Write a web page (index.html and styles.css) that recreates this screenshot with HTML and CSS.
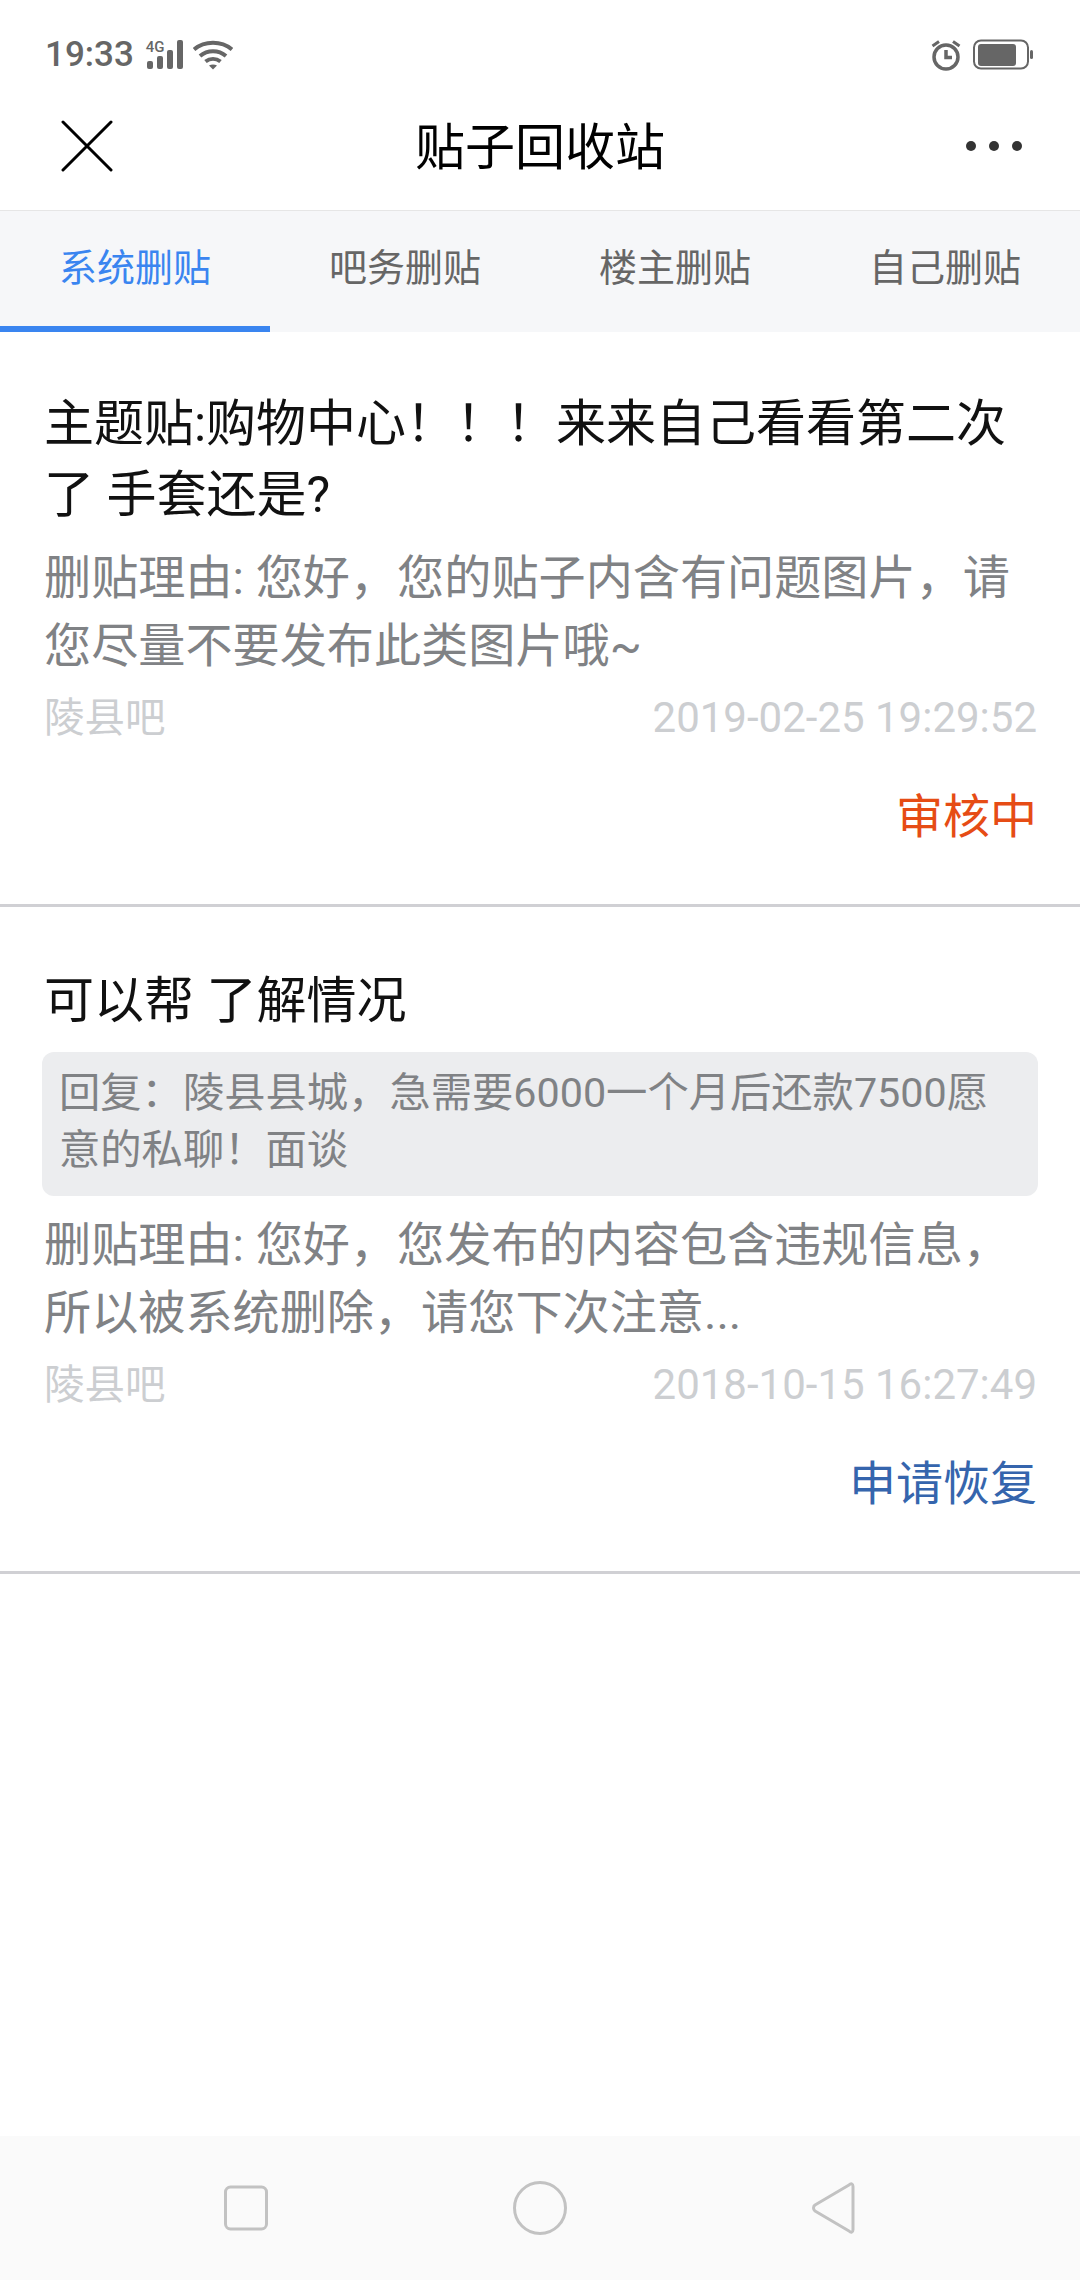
FILE: index.html
```html
<!DOCTYPE html>
<html lang="zh-CN">
<head>
<meta charset="utf-8">
<title>贴子回收站</title>
<link rel="stylesheet" href="styles.css">
</head>
<body>
<div class="screen">
  <div class="statusbar">
    <div class="status-left">
      <span class="time">19:33</span>
      <div class="signal">
        <span class="sig-text">4G</span>
        <svg class="sig" width="38" height="30" viewBox="0 0 38 30">
          <rect x="1" y="21" width="6" height="8" rx="2"/>
          <rect x="11" y="16" width="6" height="13" rx="2"/>
          <rect x="21" y="10" width="6" height="19" rx="2"/>
          <rect x="31" y="0" width="6" height="29" rx="2"/>
        </svg>
      </div>
      <svg class="wifi" width="40" height="30" viewBox="0 0 40 30">
        <path d="M1 9.500C11.500 .5 28.500 .5 39 9.500" fill="none" stroke="#666" stroke-width="4"/>
        <path d="M7 16C14.500 9.500 25.500 9.500 33 16" fill="none" stroke="#666" stroke-width="4"/>
        <path d="M12.500 21.500C17 18 23 18 27.500 21.500" fill="none" stroke="#666" stroke-width="4"/>
        <path d="M16 25.500C18.500 24 21.500 24 24 25.500L20 29.500Z" fill="#666"/>
      </svg>
    </div>
    <div class="status-right">
      <svg class="alarm" width="30" height="32" viewBox="0 0 30 32">
        <circle cx="15" cy="18" r="12" fill="none" stroke="#666" stroke-width="3.500"/>
        <path d="M15 11V18.500H21" fill="none" stroke="#666" stroke-width="3.500"/>
        <path d="M1.500 7L8 2.500M28.500 7L22 2.500" stroke="#666" stroke-width="3"/>
      </svg>
      <svg class="battery" width="60" height="32" viewBox="0 0 60 32">
        <rect x="1" y="1.500" width="54" height="28" rx="7" fill="none" stroke="#666" stroke-width="2"/>
        <rect x="5" y="5" width="38" height="22" rx="3" fill="#666"/>
        <rect x="57" y="11" width="3" height="9" rx="1.500" fill="#666"/>
      </svg>
    </div>
  </div>

  <header class="navbar">
    <svg class="close" width="52" height="52" viewBox="0 0 52 52">
      <path d="M2 2L50 50M50 2L2 50" stroke="#000" stroke-width="3" stroke-linecap="round"/>
    </svg>
    <h1 class="title">贴子回收站</h1>
    <div class="more"><i></i><i></i><i></i></div>
  </header>

  <nav class="tabs">
    <div class="tab active">系统删贴</div>
    <div class="tab">吧务删贴</div>
    <div class="tab">楼主删贴</div>
    <div class="tab">自己删贴</div>
  </nav>

  <main>
    <article class="post post-first">
      <h2 class="post-title">主题贴:购物中心！！！来来自己看看第二次了 手套还是?</h2>
      <p class="reason">删贴理由: 您好，您的贴子内含有问题图片，请您尽量不要发布此类图片哦~</p>
      <div class="meta"><span>陵县吧</span><span class="date">2019-02-25 19:29:52</span></div>
      <div class="action pending">审核中</div>
    </article>
    <article class="post post-second">
      <h2 class="post-title">可以帮 了解情况</h2>
      <blockquote class="quote">回复：陵县县城，急需要6000一个月后还款7500愿意的私聊！面谈</blockquote>
      <p class="reason">删贴理由: 您好，您发布的内容包含违规信息，所以被系统删除，请您下次注意...</p>
      <div class="meta"><span>陵县吧</span><span class="date">2018-10-15 16:27:49</span></div>
      <div class="action restore">申请恢复</div>
    </article>
  </main>

  <footer class="sysnav">
    <svg width="44" height="46" viewBox="0 0 44 46"><rect x="1.500" y="2" width="41" height="42" rx="5" fill="none" stroke="#c2c2c2" stroke-width="3"/></svg>
    <svg width="54" height="54" viewBox="0 0 54 54"><circle cx="27" cy="27" r="25.500" fill="none" stroke="#c2c2c2" stroke-width="3"/></svg>
    <svg width="44" height="52" viewBox="0 0 44 52"><path d="M41 4.500C41 1.500 39 1 37 3L3 23C1 24.500 1 27.500 3 29L37 49C39 51 41 50.500 41 47.500Z" fill="none" stroke="#c2c2c2" stroke-width="3" stroke-linejoin="round"/></svg>
  </footer>
</div>
</body>
</html>
```

FILE: styles.css
```css
* { box-sizing: border-box; }
html, body { margin: 0; padding: 0; background: #fff; }
body { font-family: Roboto, "Noto Sans CJK SC", sans-serif; }
.screen { width: 1080px; height: 2280px; display: flex; flex-direction: column; overflow: hidden; }

.statusbar { height: 70px; padding: 38px 47px 0 45px; display: flex; justify-content: space-between; align-items: flex-start; flex: none; }
.status-left { display: flex; align-items: center; height: 34px; }
.time { font-weight: 500; font-size: 35px; line-height: 34px; color: #666; }
.signal { position: relative; width: 38px; height: 30px; margin-left: 12px; }
.sig { display: block; fill: #666; }
.sig-text { position: absolute; left: 0; top: 0; font-weight: 500; font-size: 15px; line-height: 15px; color: #666; }
.wifi { margin-left: 9px; }
.status-right { display: flex; align-items: center; gap: 12px; height: 34px; }

.navbar { height: 141px; flex: none; display: flex; align-items: center; justify-content: space-between; padding: 12px 58px 0 61px; position: relative; border-bottom: 1px solid #e6e6e6; }
.title { position: absolute; left: 0; right: 0; top: 42px; margin: 0; text-align: center; font-size: 50px; line-height: 72px; font-weight: 400; color: #000; }
.more { display: flex; gap: 13px; }
.more i { width: 10px; height: 10px; border-radius: 50%; background: #333; display: block; }

.tabs { height: 121px; flex: none; display: flex; background: #f6f7f9; }
.tab { width: 270px; height: 121px; padding-bottom: 14px; display: flex; align-items: center; justify-content: center; font-size: 38px; color: #666; }
.tab.active { color: #3a85f0; border-bottom: 6px solid #3a85f0; padding-bottom: 8px; }

main { flex: 1; }
.post { padding: 0 43px 0 44px; border-bottom: 3px solid #d0d0d4; }
.post-first { height: 575px; padding-top: 57px; }
.post-second { height: 667px; padding-top: 59px; }
.post-title { margin: 0; font-size: 50px; line-height: 71px; font-weight: 400; color: #111; }
.reason { margin: 0; font-size: 47.150px; line-height: 68px; color: #808285; }
.post-first .reason { margin-top: 13px; }
.post-second .reason { margin-top: 15px; }
.quote { margin: 15px -1px 12px -2px; padding: 13px 22px 13px 17px; min-height: 144px; background: #ecedef; border-radius: 12px; font-size: 41.300px; line-height: 57px; color: #808285; }
.meta { display: flex; justify-content: space-between; margin-top: 8px; font-size: 40.500px; line-height: 60px; color: #ccced1; }
.date { font-size: 42px; }
.action { text-align: right; font-size: 47px; line-height: 68px; margin-top: 35px; }
.pending { color: #e64c15; }
.restore { color: #3565ad; }

.sysnav { height: 144px; flex: none; background: #fafafa; display: flex; align-items: center; justify-content: space-between; padding: 0 224px; margin-top: 0; }
```
